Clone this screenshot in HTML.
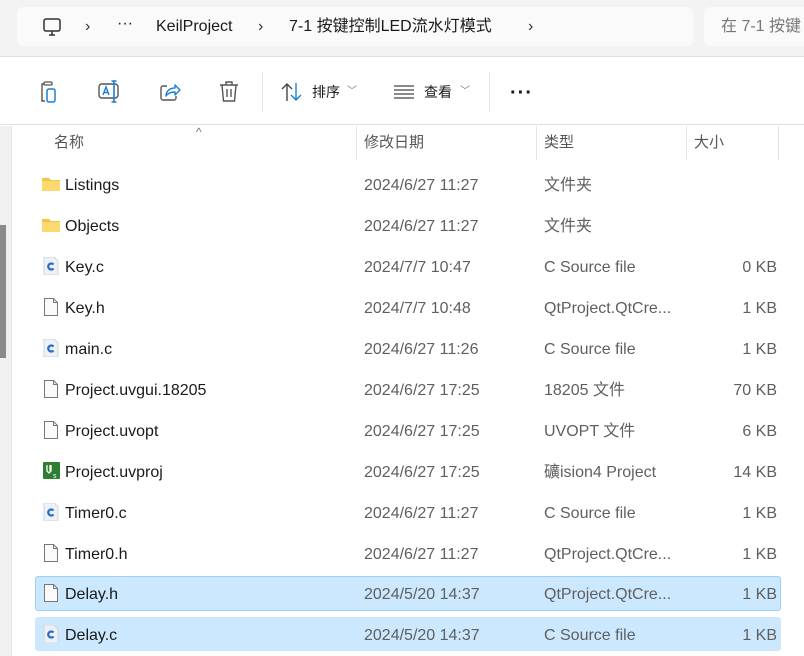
<!DOCTYPE html>
<html><head><meta charset="utf-8"><style>
*{margin:0;padding:0;box-sizing:border-box}
body{width:804px;height:656px;overflow:hidden;background:#fff;font-family:"Liberation Sans","Noto Sans CJK SC",sans-serif;position:relative}
.top{position:absolute;left:0;top:0;width:804px;height:57px;background:#f3f3f3;border-bottom:1px solid #e0e0e0}
.bc{position:absolute;left:17px;top:7px;width:676px;height:39px;background:#fafafa;border-radius:6px}
.sr{position:absolute;left:704px;top:7px;width:120px;height:39px;background:#fafafa;border-radius:6px;color:#777;font-size:16px;line-height:39px;padding-left:17px;white-space:nowrap}
.t{position:absolute;font-size:16px;color:#1a1a1a;white-space:nowrap;line-height:20px}
.tb{position:absolute;left:0;top:58px;width:804px;height:67px;background:#fff;border-bottom:1px solid #e0e0e0}
.sep{position:absolute;top:72px;width:1px;height:40px;background:#e5e5e5}
.left{position:absolute;left:0;top:126px;width:12px;height:530px;background:#f0f0f0;border-right:1px solid #e5e5e5}
.sb{position:absolute;left:0;top:225px;width:6px;height:133px;background:#8a8a8a}
.hd{position:absolute;top:126px;height:34px;font-size:15px;color:#555;line-height:34px}
.cd{position:absolute;top:126px;width:1px;height:34px;background:#e5e5e5}
.row{position:absolute;left:35px;width:746px;height:34px;font-size:16px;line-height:38px}
.row span{position:absolute;white-space:nowrap}
.n{left:30px;color:#1a1a1a}
.d{left:329px;color:#5f5f5f}
.y{left:509px;color:#5f5f5f}
.s{right:4px;color:#5f5f5f}
.ic{position:absolute;left:6px;top:8px}
.sel{background:#cce8ff;border-radius:3px}
.sel1{box-shadow:inset 0 0 0 1px #99d1ff}
</style></head><body>
<div class="top">
<div class="bc"></div>
<svg style="position:absolute;left:42px;top:17px" width="20" height="20" viewBox="0 0 20 20"><rect x="2" y="2" width="16" height="12" rx="2" fill="none" stroke="#333" stroke-width="1.5"/><path d="M7 18h6M10 14v4" stroke="#333" stroke-width="1.5"/></svg>
<div class="t" style="left:85px;top:17px;color:#333">›</div>
<div class="t" style="left:117px;top:14px">···</div>
<div class="t" style="left:156px;top:17px">KeilProject</div>
<div class="t" style="left:258px;top:17px;color:#333">›</div>
<div class="t" style="left:289px;top:17px">7-1 按键控制LED流水灯模式</div>
<div class="t" style="left:528px;top:17px;color:#333">›</div>
<div class="sr">在 7-1 按键</div>
</div>
<div class="tb"></div>
<svg style="position:absolute;left:38px;top:80px" width="22" height="24" viewBox="0 0 22 24"><path d="M6 4H4v17h3" fill="none" stroke="#555" stroke-width="1.4"/><rect x="6" y="2" width="8" height="3" rx="1" fill="none" stroke="#555" stroke-width="1.3"/><rect x="9" y="9" width="8" height="13" rx="2" fill="none" stroke="#1a7fd4" stroke-width="1.5"/></svg>
<svg style="position:absolute;left:97px;top:80px" width="24" height="24" viewBox="0 0 24 24"><rect x="2" y="4" width="19" height="14" rx="3" fill="none" stroke="#555" stroke-width="1.4"/><path d="M6 15l3-8 3 8M7 12.5h4" fill="none" stroke="#1a7fd4" stroke-width="1.4"/><path d="M17 1v21M14.5 1h5M14.5 22h5" stroke="#1a7fd4" stroke-width="1.6"/></svg>
<svg style="position:absolute;left:158px;top:80px" width="24" height="24" viewBox="0 0 24 24"><path d="M9 6H5a2 2 0 0 0-2 2v10a2 2 0 0 0 2 2h11a2 2 0 0 0 2-2v-2" fill="none" stroke="#555" stroke-width="1.4"/><path d="M8 16c0-5 4-8 9-8V5l5 5-5 5v-3c-4 0-7 1-9 4z" fill="none" stroke="#1a7fd4" stroke-width="1.4" stroke-linejoin="round"/></svg>
<svg style="position:absolute;left:218px;top:80px" width="22" height="24" viewBox="0 0 22 24"><path d="M2 5h18M8 5V2h6v3M4 5l1.5 16h11L18 5M9 9v8M13 9v8" fill="none" stroke="#555" stroke-width="1.4"/></svg>
<div class="sep" style="left:262px"></div>
<svg style="position:absolute;left:280px;top:81px" width="24" height="22" viewBox="0 0 24 22"><path d="M7 20V3M2 8l5-5 5 5" fill="none" stroke="#444" stroke-width="1.4"/><path d="M16 2v17M11 14l5 5 5-5" fill="none" stroke="#1a7fd4" stroke-width="1.4"/></svg>
<div class="t" style="left:312px;top:82px;font-size:14px">排序</div>
<div class="t" style="left:347px;top:82px;font-size:10px;color:#777">﹀</div>
<svg style="position:absolute;left:393px;top:84px" width="22" height="16" viewBox="0 0 22 16"><path d="M1 2h20M1 6h20M1 10h20M1 14h20" stroke="#444" stroke-width="1.3"/></svg>
<div class="t" style="left:424px;top:82px;font-size:14px">查看</div>
<div class="t" style="left:460px;top:82px;font-size:10px;color:#777">﹀</div>
<div class="sep" style="left:489px"></div>
<div class="t" style="left:510px;top:83px;font-size:20px;font-weight:bold;letter-spacing:1px">···</div>
<div class="left"></div><div class="sb"></div>
<div class="t" style="left:196px;top:122px;font-size:12px;color:#777">^</div>
<div class="hd" style="left:54px">名称</div>
<div class="cd" style="left:356px"></div><div class="hd" style="left:364px">修改日期</div>
<div class="cd" style="left:536px"></div><div class="hd" style="left:544px">类型</div>
<div class="cd" style="left:686px"></div><div class="hd" style="left:694px">大小</div>
<div class="cd" style="left:778px"></div>

<svg width="0" height="0" style="position:absolute"><defs>
<symbol id="fo" viewBox="0 0 20 18"><path d="M1 3h7l2 2h9v11H1z" fill="#f4c545"/><path d="M1 6h18v10H1z" fill="#fbd970"/></symbol>
<symbol id="fc" viewBox="0 0 20 18"><path d="M3 0h10l4 4v14H3z" fill="#eef2f6" stroke="#cfd6de"/><path d="M12.5 7.5a3 3 0 1 0 0 4" fill="none" stroke="#2a6fc9" stroke-width="2.3"/></symbol>
<symbol id="fh" viewBox="0 0 20 18"><path d="M3.5 .5h9l4 4v13h-13z" fill="#fafafa" stroke="#777"/><path d="M12.5 .5v4h4" fill="none" stroke="#777"/></symbol>
<symbol id="fu" viewBox="0 0 20 18"><rect x="2" y="0" width="17" height="17" rx="1" fill="#2e7d32"/><path d="M6 3v6l2 2 2-2V3M9 3v6" stroke="#fff" stroke-width="1.3" fill="none"/><text x="12" y="16" font-size="7" fill="#fff" font-family="Liberation Sans">s</text></symbol>
</defs></svg>

<div class="row" style="top:167px"><svg class="ic" width="20" height="18"><use href="#fo"/></svg><span class="n">Listings</span><span class="d">2024/6/27 11:27</span><span class="y">文件夹</span></div>
<div class="row" style="top:208px"><svg class="ic" width="20" height="18"><use href="#fo"/></svg><span class="n">Objects</span><span class="d">2024/6/27 11:27</span><span class="y">文件夹</span></div>
<div class="row" style="top:249px"><svg class="ic" width="20" height="18"><use href="#fc"/></svg><span class="n">Key.c</span><span class="d">2024/7/7 10:47</span><span class="y">C Source file</span><span class="s">0 KB</span></div>
<div class="row" style="top:290px"><svg class="ic" width="20" height="18"><use href="#fh"/></svg><span class="n">Key.h</span><span class="d">2024/7/7 10:48</span><span class="y">QtProject.QtCre...</span><span class="s">1 KB</span></div>
<div class="row" style="top:331px"><svg class="ic" width="20" height="18"><use href="#fc"/></svg><span class="n">main.c</span><span class="d">2024/6/27 11:26</span><span class="y">C Source file</span><span class="s">1 KB</span></div>
<div class="row" style="top:372px"><svg class="ic" width="20" height="18"><use href="#fh"/></svg><span class="n">Project.uvgui.18205</span><span class="d">2024/6/27 17:25</span><span class="y">18205 文件</span><span class="s">70 KB</span></div>
<div class="row" style="top:413px"><svg class="ic" width="20" height="18"><use href="#fh"/></svg><span class="n">Project.uvopt</span><span class="d">2024/6/27 17:25</span><span class="y">UVOPT 文件</span><span class="s">6 KB</span></div>
<div class="row" style="top:454px"><svg class="ic" width="20" height="18"><use href="#fu"/></svg><span class="n">Project.uvproj</span><span class="d">2024/6/27 17:25</span><span class="y">礦ision4 Project</span><span class="s">14 KB</span></div>
<div class="row" style="top:495px"><svg class="ic" width="20" height="18"><use href="#fc"/></svg><span class="n">Timer0.c</span><span class="d">2024/6/27 11:27</span><span class="y">C Source file</span><span class="s">1 KB</span></div>
<div class="row" style="top:536px"><svg class="ic" width="20" height="18"><use href="#fh"/></svg><span class="n">Timer0.h</span><span class="d">2024/6/27 11:27</span><span class="y">QtProject.QtCre...</span><span class="s">1 KB</span></div>
<div class="row sel sel1" style="top:576px;height:35px"><svg class="ic" width="20" height="18"><use href="#fh"/></svg><span class="n">Delay.h</span><span class="d">2024/5/20 14:37</span><span class="y">QtProject.QtCre...</span><span class="s">1 KB</span></div>
<div class="row sel" style="top:617px"><svg class="ic" width="20" height="18"><use href="#fc"/></svg><span class="n">Delay.c</span><span class="d">2024/5/20 14:37</span><span class="y">C Source file</span><span class="s">1 KB</span></div>
</body></html>
